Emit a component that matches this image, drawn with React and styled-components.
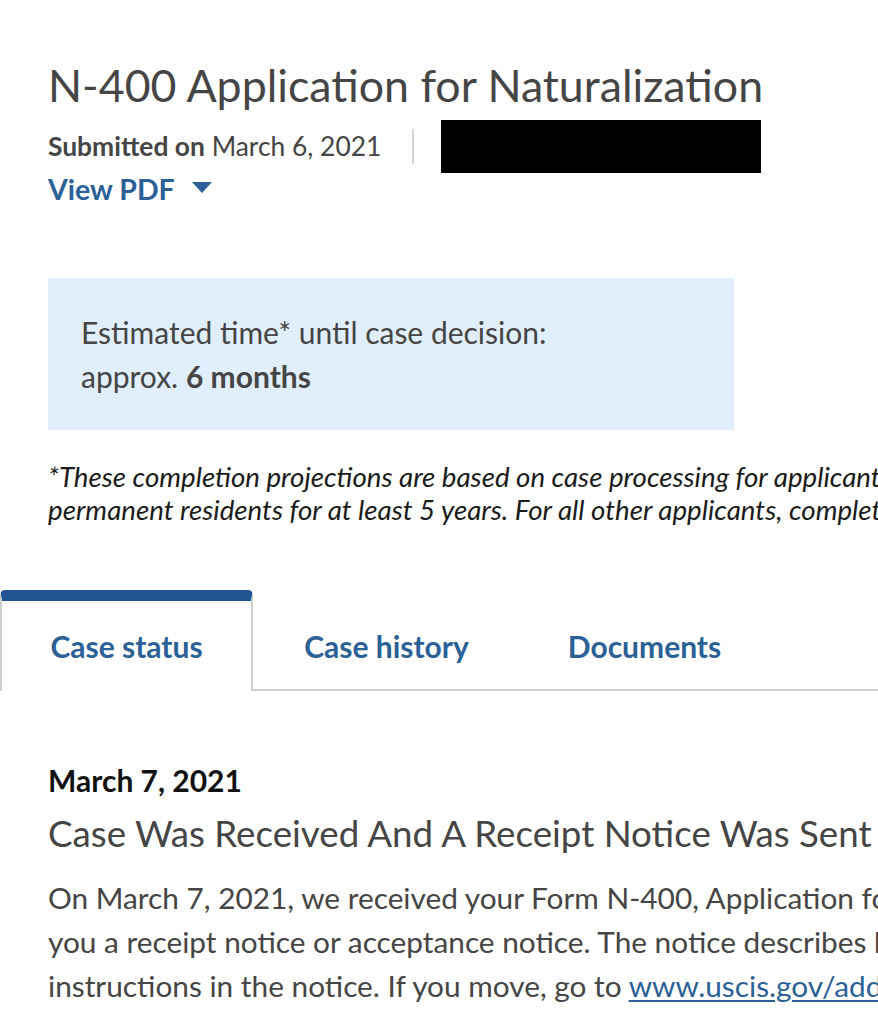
import React from 'react';
import styled, {createGlobalStyle} from 'styled-components';

const GlobalStyles = createGlobalStyle`
html, body {
    margin: 0;
    padding: 0;
    background: #fff;
    overflow: hidden;
}
body {
    font-family: Lato, "Source Sans Pro", "Noto Sans", sans-serif;
    color: #454545;
}
`;

const Page = styled.div`
width: 1600px;
padding-top: 59px;
`;

const Section = styled.div`
padding-left: 48px;
`;

const Title = styled.h1`
margin: 0;
font-size: 44.7px;
line-height: 52px;
font-weight: 400;
color: #454545;
`;

const MetaRow = styled.div`
display: flex;
align-items: center;
height: 53px;
margin-top: 9px;
`;

const MetaText = styled.span`
font-size: 26.4px;
line-height: 53px;
color: #454545;

b {
    font-weight: 700;
}
`;

const Divider = styled.span`
width: 2px;
height: 35px;
background: #d6d6d6;
margin: 0 27px 0 31px;
`;

const Redacted = styled.div`
width: 320px;
height: 53px;
background: #000;
`;

const PdfToggle = styled.button`
display: inline-flex;
align-items: center;
padding: 0;
border: none;
background: transparent;
font-family: inherit;
font-size: 28.5px;
line-height: 32px;
font-weight: 700;
color: #2b6196;
cursor: pointer;
`;

const Caret = styled.span`
width: 0;
height: 0;
margin: 0 0 3px 17px;
border-left: 10px solid transparent;
border-right: 10px solid transparent;
border-top: 11px solid #2b6196;
`;

const Estimate = styled.div`
box-sizing: border-box;
width: 686px;
margin-top: 73px;
padding: 32px 0 32px 33px;
background: #e1effc;
font-size: 30px;
line-height: 44px;
color: #454545;

b {
    font-weight: 700;
}
`;

const Footnote = styled.p`
margin: 30px 0 0;
font-size: 27.7px;
line-height: 33px;
font-style: italic;
color: #1b1b1b;
white-space: nowrap;
`;

const TabBar = styled.div`
display: flex;
align-items: flex-end;
margin-top: 64px;
border-bottom: 2px solid #cfcfcf;
`;

const Tab = styled.button`
box-sizing: border-box;
width: ${p => p.$w}px;
height: 101px;
padding: 0;
margin-bottom: -2px;
background: ${p => (p.$active ? '#fff' : 'transparent')};
border: 2px solid ${p => (p.$active ? '#cfcfcf' : 'transparent')};
border-top: 11px solid ${p => (p.$active ? '#205493' : 'transparent')};
border-bottom: none;
border-radius: 5px 5px 0 0;
font-family: inherit;
font-size: 30px;
font-weight: 700;
line-height: 88px;
color: #2b6196;
text-align: center;
white-space: nowrap;
cursor: pointer;
`;

const DateLabel = styled.div`
margin-top: 72px;
font-size: 30px;
line-height: 34px;
font-weight: 700;
color: #111;
`;

const StatusTitle = styled.h2`
margin: 14px 0 0;
font-size: 36.7px;
line-height: 44px;
font-weight: 400;
color: #454545;
`;

const Body = styled.p`
margin: 21px 0 0;
font-size: 29.8px;
line-height: 44px;
color: #454545;
white-space: nowrap;

a {
    color: #2b6196;
    text-decoration: underline;
    text-underline-offset: 3px;
}
`;

const tabs = [
    {label: 'Case status', w: 253, active: true},
    {label: 'Case history', w: 267},
    {label: 'Documents', w: 249},
];

export default function App() {
    return (
        <>
            <GlobalStyles />
            <Page>
                <Section>
                    <Title>N-400 Application for Naturalization</Title>
                    <MetaRow>
                        <MetaText><b>Submitted on</b> March 6, 2021</MetaText>
                        <Divider />
                        <Redacted />
                    </MetaRow>
                    <PdfToggle>View PDF<Caret /></PdfToggle>
                    <Estimate>
                        Estimated time* until case decision:<br />
                        approx. <b>6 months</b>
                    </Estimate>
                    <Footnote>
                        *These completion projections are based on case processing for applicants who have been lawful<br />
                        permanent residents for at least 5 years. For all other applicants, completion times may vary.
                    </Footnote>
                </Section>
                <TabBar>
                    {tabs.map(t => (
                        <Tab key={t.label} $w={t.w} $active={t.active}>{t.label}</Tab>
                    ))}
                </TabBar>
                <Section>
                    <DateLabel>March 7, 2021</DateLabel>
                    <StatusTitle>Case Was Received And A Receipt Notice Was Sent</StatusTitle>
                    <Body>
                        On March 7, 2021, we received your Form N-400, Application for Naturalization, and sent<br />
                        you a receipt notice or acceptance notice. The notice describes how we will process your case. Please follow the<br />
                        instructions in the notice. If you move, go to <a href="#">www.uscis.gov/addresschange</a> to give us your new mailing address.
                    </Body>
                </Section>
            </Page>
        </>
    );
}
